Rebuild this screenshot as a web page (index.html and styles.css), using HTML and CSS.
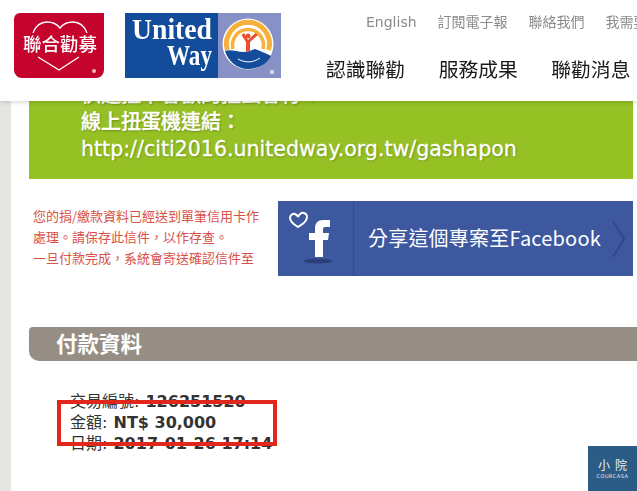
FILE: index.html
```html
<!DOCTYPE html>
<html lang="zh-Hant">
<head>
  <meta charset="UTF-8" />
  <meta name="viewport" content="width=device-width, initial-scale=1.0"/>
  <title>付款資料</title>
  <link rel="stylesheet" href="styles.css">
</head>
<body>

<header class="site-header">
  <div class="logos">
    <svg class="logo-heart" viewBox="0 0 90 65" width="90" height="65">
      <path d="M0 0H90V57a8 8 0 0 1-8 8H8a8 8 0 0 1-8-8V6a6 6 0 0 1 6-6z" fill="#c4042d"/>
      <path d="M19 20C22 12 27 9 33 9C38 9 43 11 46 15C49 11 54 9 59 9C65 9 70 12 73 20" fill="none" stroke="#fff" stroke-width="1.300"/>
      <path d="M24 44L45 57L65 44" fill="none" stroke="#fff" stroke-width="1.300"/>
      <text class="logo-heart-text" x="46" y="38" text-anchor="middle">聯合勸募</text>
      <circle cx="80" cy="58" r="2" fill="#eeb9c4"/>
    </svg>
    <svg class="logo-way" viewBox="0 0 156 65" width="156" height="65">
      <rect width="93" height="65" fill="#124c9a"/>
      <rect x="93" width="63" height="65" fill="#8791c5"/>
      <text class="logo-way-text" x="7" y="26" textLength="80" lengthAdjust="spacingAndGlyphs">United</text>
      <text class="logo-way-text" x="42" y="52" textLength="45" lengthAdjust="spacingAndGlyphs">Way</text>
      <circle cx="123" cy="31" r="25.500" fill="#fff"/>
      <path d="M102.400 37A21.500 21.500 0 1 1 143.600 37" fill="none" stroke="#f6b13c" stroke-width="5"/>
      <path d="M108 36A15.500 15.500 0 1 1 138 36" fill="none" stroke="#f6b13c" stroke-width="3.500"/>
      <path d="M100 38C106 36 112 39 118 39C123 39 126 37 130 36C135 38 141 40 146 43C142 51 133 56 123 56C112 56 103 48 100 38z" fill="#124c9a"/>
      <path d="M113 46C120 50 128 50 135 45" fill="none" stroke="#fff" stroke-width="1"/>
      <path d="M116.500 22L121 29V38.500H125V29L133 22L130.500 20L123 27L119 20z" fill="#e8512d"/>
      <circle cx="123" cy="23" r="2.500" fill="#e8512d"/>
      <circle cx="147" cy="59" r="2" fill="#dfe2f0"/>
    </svg>
  </div>
  <div class="header-nav">
    <nav class="top-links">
      <a>English</a>
      <a>訂閱電子報</a>
      <a>聯絡我們</a>
      <a>我需要協助</a>
    </nav>
    <nav class="main-links">
      <a>認識聯勸</a>
      <a>服務成果</a>
      <a>聯勸消息</a>
    </nav>
  </div>
</header>

<main class="content">
  <div class="banner">
    <p>快速扭卡會歡的扭蛋會行：</p>
    <p>線上扭蛋機連結：</p>
    <p class="banner-url">http://citi2016.unitedway.org.tw/gashapon</p>
  </div>

  <div class="notice-row">
    <p class="notice">您的捐/繳款資料已經送到單筆信用卡作處理。請保存此信件，以作存查。<br>一旦付款完成，系統會寄送確認信件至</p>
    <a class="fb-share">
      <span class="fb-icon">
        <svg viewBox="0 0 75 75" width="75" height="75">
          <path d="M20 26C15 23 12 20 12 17C12 14 15 12 17 13C19 14 20 15 20 16C21 14 23 11 26 12C29 13 30 16 28 19C27 22 23 24 20 26z" fill="none" stroke="#fff" stroke-width="2"/>
          <ellipse cx="40" cy="60" rx="14" ry="2.500" fill="#2a3f78"/>
          <path d="M37 56V39H31V32H37V27C37 22 40 19 45 19H52V26H47C45.500 26 45 27 45 28V32H51L50 39H45V56z" fill="#fff"/>
        </svg>
      </span>
      <span class="fb-label">分享這個專案至Facebook</span>
      <svg class="fb-arrow" viewBox="0 0 14 38" width="14" height="38">
        <path d="M1 1L12 19L1 37" fill="none" stroke="#30488a" stroke-width="2"/>
      </svg>
    </a>
  </div>

  <h2 class="section-title">付款資料</h2>

  <div class="pay-info">
    <p>交易編號: <strong>126251520</strong></p>
    <p>金額: <strong>NT$ 30,000</strong></p>
    <p>日期: <strong>2017-01-26 17:14</strong></p>
    <div class="mark"></div>
  </div>
</main>

<div class="badge">
  <span class="badge-name">小院</span>
  <span class="badge-sub">COURCASA</span>
</div>

</body>
</html>
```

FILE: styles.css
```css
* {
  box-sizing: border-box;
  margin: 0;
  padding: 0;
}

html, body {
  height: 100%;
  overflow: hidden;
}

body {
  font-family: 'DejaVu Sans', 'Noto Sans CJK TC', sans-serif;
  background: #e6e5e0;
  color: #333;
}

.site-header {
  position: fixed;
  top: 0;
  left: 0;
  width: 100%;
  height: 101px;
  z-index: 5;
  display: flex;
  justify-content: space-between;
  padding: 13px 0 0 14px;
  background: #fff;
  box-shadow: 0 1px 5px rgba(0,0,0,0.18);
  overflow: hidden;
}

.logos {
  display: flex;
  gap: 21px;
  align-items: flex-start;
}

.logo-heart-text {
  font-family: 'Noto Sans CJK TC', sans-serif;
  font-size: 18.5px;
  font-weight: 500;
  fill: #fff;
}

.logo-way-text {
  font-family: 'Liberation Serif', serif;
  font-size: 30px;
  font-weight: 700;
  fill: #fff;
}

.header-nav {
  position: absolute;
  left: 326px;
  top: 0;
  white-space: nowrap;
}

.top-links {
  display: flex;
  gap: 21px;
  margin: 13px 0 0 40px;
  font-size: 14px;
  line-height: 18px;
  color: #8b8b8b;
}

.main-links {
  display: flex;
  gap: 33.5px;
  margin-top: 23px;
  font-family: 'Noto Sans CJK TC', sans-serif;
  font-size: 19.8px;
  line-height: 30px;
  color: #1a1a1a;
}

.content {
  margin-left: 11px;
  height: 100%;
  padding: 82px 4px 0 18px;
  background: #fff;
}

.banner {
  height: 97px;
  padding: 0 0 0 52px;
  background: #95c125;
  color: #fff;
  font-size: 20px;
  font-weight: 500;
  line-height: 27px;
  text-shadow: 1px 1px 2px rgba(60,80,0,0.45);
  -webkit-text-stroke: 0.3px #fff;
  white-space: nowrap;
}

.banner-url {
  font-size: 20.55px;
}

.notice-row {
  display: flex;
  justify-content: space-between;
  margin-top: 22px;
}

.notice {
  width: 232px;
  margin: 4px 0 0 4px;
  font-family: 'Noto Sans CJK TC', sans-serif;
  font-size: 13px;
  line-height: 21px;
  color: #d9504a;
}

.fb-share {
  display: flex;
  align-items: center;
  width: 355px;
  height: 75px;
  background: #3d589f;
  color: #fff;
}

.fb-icon {
  display: flex;
  width: 76px;
  height: 75px;
  border-right: 1px solid #324b8a;
}

.fb-label {
  margin: 0 0 3px 14px;
  font-size: 20px;
  letter-spacing: 0.2px;
  font-family: 'Noto Sans CJK TC', sans-serif;
  white-space: nowrap;
}

.fb-arrow {
  margin-left: 11px;
}

.section-title {
  margin: 51px -4px 0 0;
  height: 34px;
  padding-left: 27px;
  background: #968d85;
  border-radius: 4px 0 0 10px;
  color: #fff;
  font-family: 'Noto Sans CJK TC', sans-serif;
  font-size: 21.5px;
  font-weight: 700;
  line-height: 31px;
}

.pay-info {
  position: relative;
  margin-top: 30px;
  padding-left: 41px;
  font-size: 16px;
  line-height: 21px;
  white-space: nowrap;
}

.pay-info strong {
  margin-left: 1px;
}

.mark {
  position: absolute;
  left: 28px;
  top: 9px;
  width: 220px;
  height: 46px;
  border: 4px solid #e0271c;
}

.badge {
  position: fixed;
  right: 0;
  bottom: 0;
  width: 49px;
  height: 45px;
  display: flex;
  flex-direction: column;
  align-items: center;
  padding-top: 11px;
  background: #2b5c85;
  color: #e8eef3;
}

.badge-name {
  margin-right: -5px;
  font-family: 'Noto Sans CJK TC', sans-serif;
  font-size: 12px;
  line-height: 15px;
  letter-spacing: 5px;
}

.badge-sub {
  font-size: 5px;
  line-height: 8px;
  letter-spacing: 0.5px;
}
```
